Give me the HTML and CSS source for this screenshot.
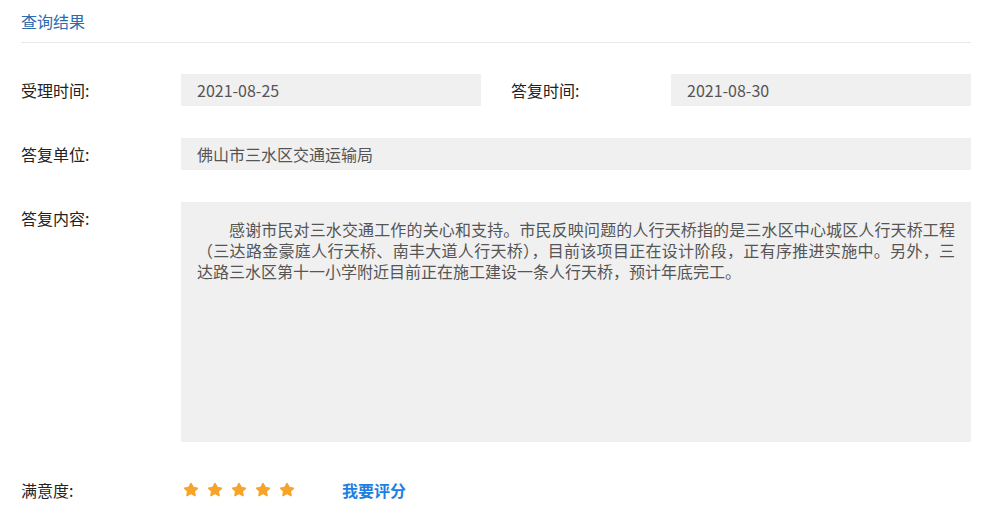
FILE: index.html
```html
<!DOCTYPE html>
<html lang="zh-CN">
<head>
<meta charset="utf-8">
<title>查询结果</title>
<link rel="stylesheet" href="styles.css">
</head>
<body>
<div class="page">
  <div class="title-bar"><span class="title">查询结果</span></div>
  <div class="form">
    <div class="row row-two">
      <div class="label">受理时间:</div>
      <div class="value">2021-08-25</div>
      <div class="spacer"></div>
      <div class="label">答复时间:</div>
      <div class="value">2021-08-30</div>
    </div>
    <div class="row">
      <div class="label">答复单位:</div>
      <div class="value">佛山市三水区交通运输局</div>
    </div>
    <div class="row">
      <div class="label">答复内容:</div>
      <div class="value content">感谢市民对三水交通工作的关心和支持。市民反映问题的人行天桥指的是三水区中心城区人行天桥工程（三达路金豪庭人行天桥、南丰大道人行天桥），目前该项目正在设计阶段，正有序推进实施中。另外，三达路三水区第十一小学附近目前正在施工建设一条人行天桥，预计年底完工。</div>
    </div>
    <div class="row">
      <div class="label">满意度:</div>
      <div class="rating">
        <div class="stars">
          <svg class="star" viewBox="0 0 24 24"><path d="M12 2.2c.5 0 .9.3 1.1.7l2.3 4.9 5.3.7c.9.1 1.3 1.2.6 1.8l-3.9 3.7 1 5.3c.2.9-.8 1.6-1.6 1.1L12 17.8l-4.8 2.6c-.8.5-1.8-.2-1.6-1.1l1-5.3-3.9-3.7c-.7-.6-.3-1.7.6-1.8l5.3-.7 2.3-4.9c.2-.4.6-.7 1.1-.7z"/></svg>
          <svg class="star" viewBox="0 0 24 24"><path d="M12 2.2c.5 0 .9.3 1.1.7l2.3 4.9 5.3.7c.9.1 1.3 1.2.6 1.8l-3.9 3.7 1 5.3c.2.9-.8 1.6-1.6 1.1L12 17.8l-4.8 2.6c-.8.5-1.8-.2-1.6-1.1l1-5.3-3.9-3.7c-.7-.6-.3-1.7.6-1.8l5.3-.7 2.3-4.9c.2-.4.6-.7 1.1-.7z"/></svg>
          <svg class="star" viewBox="0 0 24 24"><path d="M12 2.2c.5 0 .9.3 1.1.7l2.3 4.9 5.3.7c.9.1 1.3 1.2.6 1.8l-3.9 3.7 1 5.3c.2.9-.8 1.6-1.6 1.1L12 17.8l-4.8 2.6c-.8.5-1.8-.2-1.6-1.1l1-5.3-3.9-3.7c-.7-.6-.3-1.7.6-1.8l5.3-.7 2.3-4.9c.2-.4.6-.7 1.1-.7z"/></svg>
          <svg class="star" viewBox="0 0 24 24"><path d="M12 2.2c.5 0 .9.3 1.1.7l2.3 4.9 5.3.7c.9.1 1.3 1.2.6 1.8l-3.9 3.7 1 5.3c.2.9-.8 1.6-1.6 1.1L12 17.8l-4.8 2.6c-.8.5-1.8-.2-1.6-1.1l1-5.3-3.9-3.7c-.7-.6-.3-1.7.6-1.8l5.3-.7 2.3-4.9c.2-.4.6-.7 1.1-.7z"/></svg>
          <svg class="star" viewBox="0 0 24 24"><path d="M12 2.2c.5 0 .9.3 1.1.7l2.3 4.9 5.3.7c.9.1 1.3 1.2.6 1.8l-3.9 3.7 1 5.3c.2.9-.8 1.6-1.6 1.1L12 17.8l-4.8 2.6c-.8.5-1.8-.2-1.6-1.1l1-5.3-3.9-3.7c-.7-.6-.3-1.7.6-1.8l5.3-.7 2.3-4.9c.2-.4.6-.7 1.1-.7z"/></svg>
        </div>
        <a class="rate-link" href="#">我要评分</a>
      </div>
    </div>
  </div>
</div>
</body>
</html>
```

FILE: styles.css
```css
* { box-sizing: border-box; }
html, body {
  margin: 0;
  padding: 0;
  background: #ffffff;
}
body {
  font-family: "Noto Sans CJK SC", "Noto Sans", sans-serif;
  font-size: 16px;
  color: #333333;
}
.page {
  width: 950px;
  margin-left: 21px;
}
.title-bar {
  height: 43px;
  border-bottom: 1px solid #e8e8e8;
  padding-top: 9px;
}
.title {
  font-size: 16px;
  line-height: 24px;
  color: #2b6cb0;
}
.form {
  display: flex;
  flex-direction: column;
  gap: 32px;
  padding-top: 31px;
}
.row {
  display: grid;
  grid-template-columns: 160px 1fr;
  align-items: start;
}
.row-two {
  grid-template-columns: 160px 300px 30px 160px 300px;
}
.label {
  line-height: 32px;
  color: #222222;
}
.value {
  background: #f0f0f0;
  line-height: 32px;
  padding: 0 16px;
  color: #555555;
}
.content {
  height: 240px;
  line-height: 21px;
  padding: 17px 16px 16px 16px;
  text-indent: 2em;
  text-align: justify;
}
.rating {
  display: flex;
  align-items: center;
  height: 32px;
}
.stars {
  display: flex;
  gap: 6px;
  padding-left: 1px;
}
.star {
  width: 18px;
  height: 18px;
  fill: #f7a52a;
}
.rate-link {
  margin-left: 46px;
  font-weight: bold;
  color: #1e7fe0;
  text-decoration: none;
}
```
